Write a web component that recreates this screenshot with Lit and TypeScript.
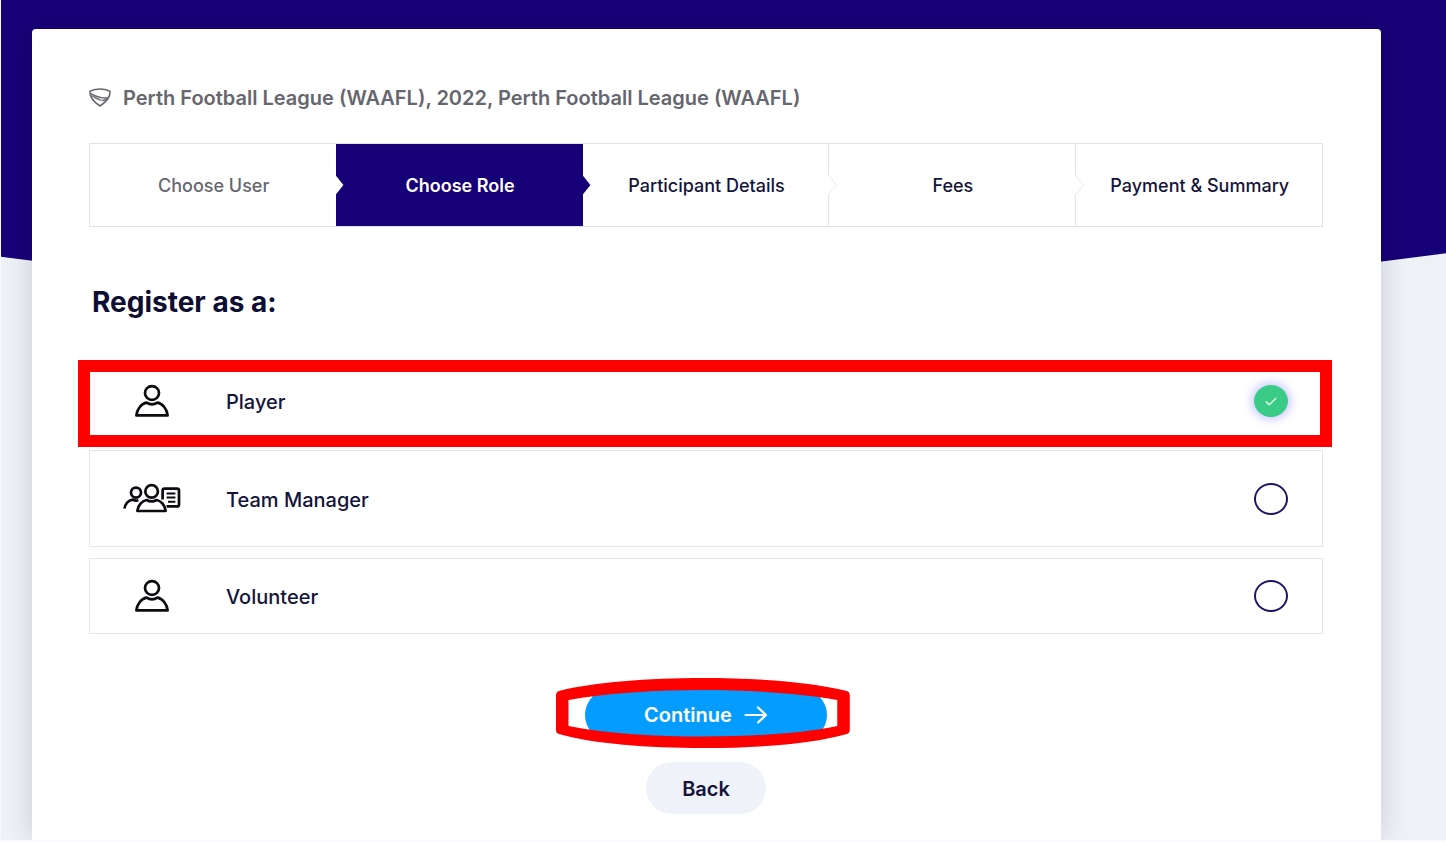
import { LitElement, html, css, svg } from "lit";
import { customElement, state } from "lit/decorators.js";

type Role = { id: string; label: string; icon: "person" | "team" };

const ROLES: Role[] = [
  { id: "player", label: "Player", icon: "person" },
  { id: "manager", label: "Team Manager", icon: "team" },
  { id: "volunteer", label: "Volunteer", icon: "person" },
];

const STEPS = ["Choose User", "Choose Role", "Participant Details", "Fees", "Payment & Summary"];

const shield = html`<svg class="shield" viewBox="0 0 22 20" width="22" height="20" aria-hidden="true">
  <g fill="none" stroke="currentColor" stroke-width="1.5" stroke-linejoin="round">
    <path d="M1 3.2Q11 -1 21 3.2C21.4 8 18 13.5 11 18C4 13.5 0.6 8 1 3.2Z" />
    <path d="M1.4 5.4C5 7.4 10 10.6 18.8 10" />
    <path d="M2.6 7.6C5.600 10.800 9.600 12.400 13 12.400L18.800 10L15 13.200Z" fill="currentColor" stroke-width="0.5" />
  </g>
</svg>`;

const person = svg`
  <ellipse cx="17" cy="9" rx="7" ry="6.9" />
  <path d="M1.4 31.4C2 25 6.4 19.6 11.6 18.6Q17 22 22.4 18.6C27.6 19.6 32 25 32.6 31.4Z" />`;

const personIcon = html`<svg viewBox="0 0 34 34" width="34" height="34" aria-hidden="true">
  <g fill="none" stroke="#0b0b10" stroke-width="2.7" stroke-linejoin="round">${person}</g>
</svg>`;

const teamIcon = html`<svg viewBox="0 0 58 32" width="58" height="32" aria-hidden="true">
  <g fill="none" stroke="#0b0b10" stroke-width="2.7" stroke-linejoin="round">
    <ellipse cx="13" cy="9.6" rx="5" ry="5" />
    <path d="M1.4 25.4C2.4 20.4 6 17 9.8 16.6Q12.4 18.2 15.4 17.2" />
    <ellipse cx="28.6" cy="8.4" rx="6.3" ry="6.3" />
    <path d="M14.4 28C15 22.4 19 17.8 23.6 17Q28.6 19.8 33.6 17C38.2 17.8 42 22.4 42.6 28Z" />
    <path d="M39.6 16.6V7.6Q39.6 5.6 41.6 5.6H54Q56 5.6 56 7.6V21.4Q56 23.4 54 23.4H43.6" />
    <path d="M43.6 10.4H52.4M43.6 14.6H52.4M45 18.8H52.4" stroke-width="2" />
  </g>
</svg>`;

@customElement("app-root")
export class AppRoot extends LitElement {
  @state() private selected = "player";

  static styles = css`
    :host {
      display: block;
      box-sizing: border-box;
      min-height: 100vh;
      padding: 0 0 2px 1px;
      background: #fafafc;
      color: #14143a;
      font-family: Inter, "Liberation Sans", sans-serif;
      font-weight: 500;
    }
    * {
      box-sizing: border-box;
    }
    .page {
      display: grid;
      grid-template: minmax(calc(100vh - 2px), auto) / minmax(0, 1fr);
      overflow: hidden;
      background: #eef2f7;
    }
    .hero {
      grid-area: 1 / 1;
      height: 347px;
      background: #160078;
      clip-path: polygon(0 0, 100% 0, 100% 73%, 49% 100%, 0 74%);
    }
    .card {
      grid-area: 1 / 1;
      position: relative;
      margin: 29px 65px 0 31px;
      padding: 56px 58px 24px 57px;
      border-radius: 4px 4px 0 0;
      background: #fff;
      box-shadow: 0 0 28px rgba(0, 0, 30, 0.16);
    }
    .league {
      display: flex;
      align-items: center;
      gap: 12px;
      margin: 0 0 32px;
      color: #66666f;
      font-size: 20px;
      line-height: 26px;
      font-weight: 600;
    }
    .shield {
      flex: none;
    }
    .steps {
      display: grid;
      grid-template-columns: repeat(5, 1fr);
      margin: 0;
      padding: 0;
      list-style: none;
      border: 1px solid #e3e3e6;
    }
    .step {
      position: relative;
      display: flex;
      align-items: center;
      justify-content: center;
      height: 82px;
      padding: 2px 0 0 2px;
      border-right: 1px solid #e3e3e6;
      font-size: 18px;
      line-height: 24px;
      white-space: nowrap;
    }
    .step:last-child {
      border-right: 0;
    }
    .step.done {
      border-color: #fff;
      color: #66666f;
    }
    .step.current {
      background: #160078;
      border-color: #160078;
      color: #fff;
      font-weight: 600;
    }
    .notch {
      position: absolute;
      z-index: 1;
      top: 30px;
      left: 100%;
      fill: #fff;
      stroke: #e9e9ec;
    }
    .done .notch {
      stroke: none;
    }
    .current .notch {
      fill: #160078;
      stroke: none;
    }
    .title {
      margin: 56px 0 42px 3px;
      font-size: 28px;
      line-height: 38px;
      font-weight: 700;
      color: #0e0e33;
    }
    .roles {
      display: grid;
      gap: 11px;
      margin: 0;
      padding: 0;
      border: 0;
    }
    .role {
      position: relative;
      display: grid;
      grid-template-columns: 124px 1fr 34px;
      align-items: center;
      min-height: 76px;
      padding-right: 34px;
      border: 1px solid #e6e6e9;
      font-size: 20px;
      line-height: 26px;
    }
    .role.tall {
      min-height: 97px;
    }
    .icon {
      display: grid;
      place-items: center;
    }
    .name {
      padding: 2px 0 0 12px;
    }
    .pick {
      display: grid;
    }
    .pick > * {
      grid-area: 1 / 1;
      place-self: center;
    }
    .radio {
      appearance: none;
      width: 34px;
      height: 32px;
      margin: 0;
      border: 2px solid #1b1464;
      border-radius: 50%;
      background: #fff;
    }
    .radio:checked {
      border: 0;
      background: #3acb86;
      box-shadow: 0 0 8px 3px rgba(110, 110, 255, 0.35);
    }
    .tick {
      pointer-events: none;
    }
    .marked::after {
      content: "";
      position: absolute;
      inset: -4px -10px -9px -12px;
      border: 12px solid #fe0000;
      pointer-events: none;
    }
    .actions {
      display: flex;
      flex-direction: column;
      align-items: center;
      gap: 21px;
      margin-top: 55px;
    }
    .primary {
      position: relative;
    }
    .btn {
      display: flex;
      align-items: center;
      justify-content: center;
      gap: 12px;
      height: 52px;
      border: 0;
      border-radius: 26px;
      font: inherit;
      font-size: 20px;
      line-height: 26px;
      cursor: pointer;
    }
    .continue {
      padding: 0 59px;
      background: #049cff;
      color: #fff;
      font-weight: 600;
    }
    .back {
      padding: 2px 36px 0;
      background: #eff2f8;
      color: #14143a;
      font-weight: 600;
    }
    .ring {
      position: absolute;
      inset: -11px -23px -7px -29px;
      width: calc(100% + 52px);
      height: calc(100% + 18px);
      pointer-events: none;
    }
  `;

  private renderStep(name: string, i: number) {
    const cls = i === 0 ? "step done" : i === 1 ? "step current" : "step";
    return html`<li class=${cls} aria-current=${i === 1 ? "step" : "false"}>
      ${name}
      ${i < STEPS.length - 1
        ? html`<svg class="notch" viewBox="0 0 9 22" width="9" height="22" aria-hidden="true">
            <path d="M-1 0.5H0L8.4 11L0 21.5H-1" />
          </svg>`
        : null}
    </li>`;
  }

  private renderRole(role: Role) {
    const checked = this.selected === role.id;
    return html`<label class="role ${role.icon === "team" ? "tall" : ""} ${role.id === "player" ? "marked" : ""}">
      <span class="icon">${role.icon === "team" ? teamIcon : personIcon}</span>
      <span class="name">${role.label}</span>
      <span class="pick">
        <input
          class="radio"
          type="radio"
          name="role"
          .checked=${checked}
          @change=${() => (this.selected = role.id)}
        />
        ${checked
          ? html`<svg class="tick" viewBox="0 0 12 9" width="12" height="9" aria-hidden="true">
              <path d="M0.8 4.4L4.2 7.8L11.2 1" fill="none" stroke="#d8ffe9" stroke-width="1.5" />
            </svg>`
          : null}
      </span>
    </label>`;
  }

  render() {
    return html`<div class="page">
      <div class="hero"></div>
      <main class="card">
        <p class="league">${shield}<span>Perth Football League (WAAFL), 2022, Perth Football League (WAAFL)</span></p>
        <ol class="steps">
          ${STEPS.map((s, i) => this.renderStep(s, i))}
        </ol>
        <h1 class="title" id="title">Register as a:</h1>
        <fieldset class="roles" aria-labelledby="title">
          ${ROLES.map((r) => this.renderRole(r))}
        </fieldset>
        <div class="actions">
          <div class="primary">
            <button class="btn continue" type="button">
              Continue
              <svg viewBox="0 0 24 18" width="24" height="18" aria-hidden="true">
                <path
                  d="M1.5 9H22M14 1.5L22 9L14 16.5"
                  fill="none"
                  stroke="#fff"
                  stroke-width="2.2"
                  stroke-linecap="round"
                  stroke-linejoin="round"
                />
              </svg>
            </button>
            <svg class="ring" viewBox="0 0 294 70" preserveAspectRatio="none" aria-hidden="true">
              <path
                fill="#fe0000"
                fill-rule="evenodd"
                d="M3 13C38 4 92 0 147 0S256 4 291 13Q294 14 294 17V52Q294 55 291 56C256 66 202 70 147 70S38 66 3 56Q0 55 0 52V17Q0 14 3 13ZM12.5 22V48C52 56 100 58.500 147 58.500S242 56 281.500 48V22C242 15 194 12 147 12S52 15 12.500 22Z"
              />
            </svg>
          </div>
          <button class="btn back" type="button">Back</button>
        </div>
      </main>
    </div>`;
  }
}
